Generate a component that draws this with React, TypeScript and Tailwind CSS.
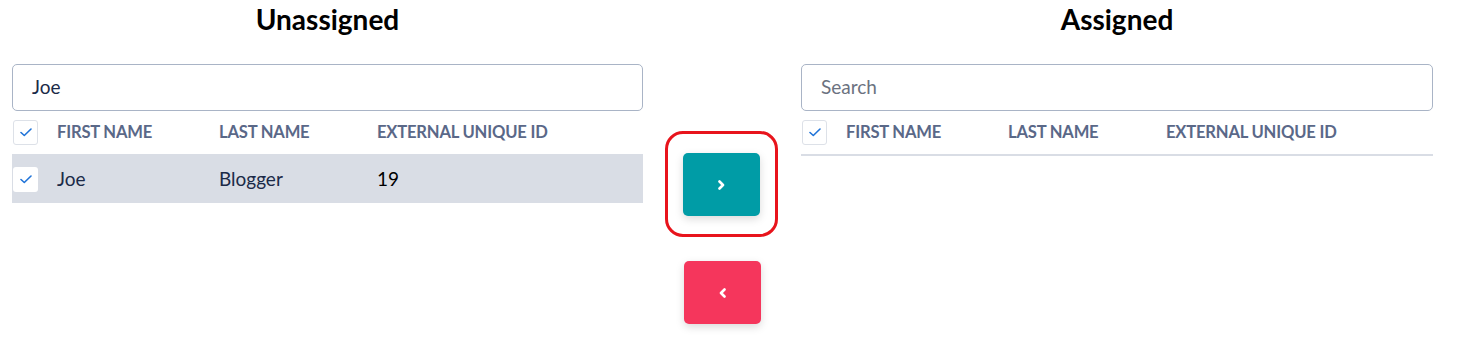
import React from "react";

const font = { fontFamily: "Lato, 'Open Sans', sans-serif" };

function Check({ bordered }: { bordered: boolean }) {
  return (
    <div
      className={
        "w-[25px] h-[25px] rounded-[3px] bg-white flex items-center justify-center " +
        (bordered ? "border border-[#dde1e8]" : "")
      }
    >
      <svg width="12" height="9" viewBox="0 0 12 9" fill="none">
        <path d="M1 4.5L4.3 7.5L11 1" stroke="#1f73d8" strokeWidth="1.6" strokeLinecap="round" strokeLinejoin="round" />
      </svg>
    </div>
  );
}

function Chevron({ dir }: { dir: "right" | "left" }) {
  return (
    <svg width="7" height="10" viewBox="0 0 7 10" fill="none">
      <path
        d={dir === "right" ? "M1.5 1.5L5 5L1.5 8.5" : "M5.5 1.5L2 5L5.5 8.5"}
        stroke="white"
        strokeWidth="2.6"
        strokeLinecap="round"
        strokeLinejoin="round"
      />
    </svg>
  );
}

function Panel({
  title,
  value,
  placeholder,
  rows,
  width,
}: {
  title: string;
  value: string;
  placeholder: string;
  rows: { first: string; last: string; id: string }[];
  width: string;
}) {
  return (
    <div className={"flex flex-col " + width}>
      <h2 className="text-[28px] leading-[36px] font-bold text-black text-center mt-[1px]">{title}</h2>
      <div className="mt-[27px] h-[47px] rounded-[5px] border border-[#a9b4c6] flex items-center px-[19px]">
        {value ? (
          <span className="text-[19px] text-[#1b2a48]">{value}</span>
        ) : (
          <span className="text-[19px] text-[#6b7280]">{placeholder}</span>
        )}
      </div>
      <div className="flex items-center h-[45px] border-b-2 border-[#d9dde5] text-[16.6px] font-bold text-[#5a6888] tracking-[-0.2px]">
        <div className="w-[45px] pl-[1px]">
          <Check bordered />
        </div>
        <div className="w-[162px]">FIRST NAME</div>
        <div className="w-[158px]">LAST NAME</div>
        <div>EXTERNAL UNIQUE ID</div>
      </div>
      {rows.map((r) => (
        <div key={r.id} className="flex items-center h-[47px] bg-[#d9dde5] text-[19px]">
          <div className="w-[45px] pl-[1px]">
            <Check bordered={false} />
          </div>
          <div className="w-[162px] text-[#1b2a48]">{r.first}</div>
          <div className="w-[158px] text-[#1b2a48]">{r.last}</div>
          <div className="text-black">{r.id}</div>
        </div>
      ))}
    </div>
  );
}

export default function App() {
  return (
    <div className="w-[1465px] h-[362px] bg-white flex pl-[12px]" style={font}>
      <Panel
        title="Unassigned"
        value="Joe"
        placeholder="Search"
        rows={[{ first: "Joe", last: "Blogger", id: "19" }]}
        width="w-[631px]"
      />
      <div className="w-[158px] flex flex-col items-center pt-[131px]">
        <div className="border-[3px] border-[#e8141c] rounded-[18px] pt-[19px] pb-[18px] px-[15px] ml-[-1px]">
          <button className="w-[77px] h-[63px] rounded-[5px] bg-[#009ca6] shadow-[0_3px_8px_rgba(0,0,0,0.15)] flex items-center justify-center">
            <Chevron dir="right" />
          </button>
        </div>
        <button className="mt-[24px] w-[77px] h-[63px] rounded-[5px] bg-[#f5365c] shadow-[0_3px_8px_rgba(0,0,0,0.15)] flex items-center justify-center">
          <Chevron dir="left" />
        </button>
      </div>
      <Panel title="Assigned" value="" placeholder="Search" rows={[]} width="w-[632px]" />
    </div>
  );
}
